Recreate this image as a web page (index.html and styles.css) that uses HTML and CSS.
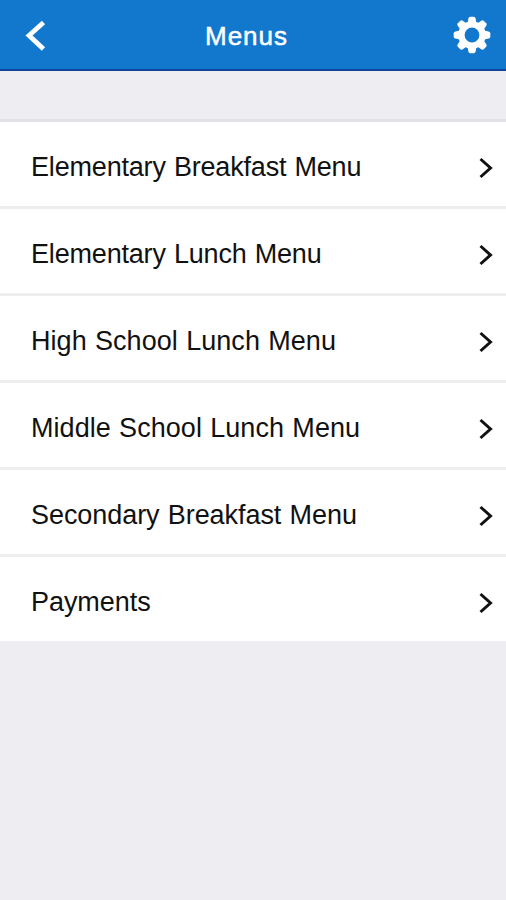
FILE: index.html
```html
<!DOCTYPE html>
<html lang="en">
<head>
<meta charset="utf-8">
<title>Menus</title>
<link rel="stylesheet" href="styles.css">
</head>
<body>
<header class="topbar">
  <a class="back" href="#" aria-label="Back">
    <svg width="24" height="34" viewBox="0 0 24 34"><path d="M19.5 4.5 L5 17.5 L19.5 31"/></svg>
  </a>
  <h1>Menus</h1>
  <a class="settings" href="#" aria-label="Settings">
    <svg width="38" height="38" viewBox="-19 -19 38 38">
      <circle r="10.6"/>
      <g id="teeth">
        <path id="tooth" d="M-4.4 -12 L-3.6 -16.6 Q-3.2 -18.3 -1.8 -18.3 H1.8 Q3.2 -18.3 3.6 -16.6 L4.4 -12 V-9.5 H-4.4 Z"/>
        <use href="#tooth" transform="rotate(45)"/>
        <use href="#tooth" transform="rotate(90)"/>
        <use href="#tooth" transform="rotate(135)"/>
        <use href="#tooth" transform="rotate(180)"/>
        <use href="#tooth" transform="rotate(225)"/>
        <use href="#tooth" transform="rotate(270)"/>
        <use href="#tooth" transform="rotate(315)"/>
      </g>
    </svg>
  </a>
</header>

<ul class="menu">
  <li class="tight"><a href="#"><span>Elementary Breakfast Menu</span><svg class="arrow" width="16" height="24" viewBox="0 0 16 24"><path d="M2.5 3 L12.5 12 L2.5 21"/></svg></a></li>
  <li class="tight"><a href="#"><span>Elementary Lunch Menu</span><svg class="arrow" width="16" height="24" viewBox="0 0 16 24"><path d="M2.5 3 L12.5 12 L2.5 21"/></svg></a></li>
  <li class="wide"><a href="#"><span>High School Lunch Menu</span><svg class="arrow" width="16" height="24" viewBox="0 0 16 24"><path d="M2.5 3 L12.5 12 L2.5 21"/></svg></a></li>
  <li class="wide"><a href="#"><span>Middle School Lunch Menu</span><svg class="arrow" width="16" height="24" viewBox="0 0 16 24"><path d="M2.5 3 L12.5 12 L2.5 21"/></svg></a></li>
  <li><a href="#"><span>Secondary Breakfast Menu</span><svg class="arrow" width="16" height="24" viewBox="0 0 16 24"><path d="M2.5 3 L12.5 12 L2.5 21"/></svg></a></li>
  <li><a href="#"><span>Payments</span><svg class="arrow" width="16" height="24" viewBox="0 0 16 24"><path d="M2.5 3 L12.5 12 L2.5 21"/></svg></a></li>
</ul>
</body>
</html>
```

FILE: styles.css
```css
* {
  box-sizing: border-box;
}

body {
  margin: 0;
  min-height: 100vh;
  font-family: "Liberation Sans", Helvetica, Arial, sans-serif;
  color: #111;
  background-color: #eeedf2;
}

a {
  color: inherit;
  text-decoration: none;
}

svg {
  display: block;
}

.topbar {
  display: grid;
  grid-template-columns: 60px 1fr 60px;
  align-items: center;
  height: 71px;
  padding: 0 15px 0 24px;
  color: #fff;
  background-color: #1278ce;
  border-bottom: 2px solid #0f459a;
}

.topbar h1 {
  margin: 2px 0 0;
  padding-right: 22px;
  font-size: 26px;
  font-weight: normal;
  letter-spacing: 1px;
  line-height: 30px;
  text-align: center;
  -webkit-text-stroke: 0.5px #fff;
}

.back path {
  fill: none;
  stroke: #fff;
  stroke-width: 4.8;
}

.settings {
  justify-self: end;
}

.settings svg {
  fill: #fff;
}

.settings circle {
  fill: none;
  stroke: #fff;
  stroke-width: 6.4;
}

.menu {
  margin: 48px 0 0;
  padding: 0;
  list-style: none;
  background-color: #fff;
  border-top: 3px solid #e2e1e6;
}

.menu a {
  display: flex;
  align-items: center;
  justify-content: space-between;
  height: 84px;
  padding: 6px 12px 0 31px;
  font-size: 27px;
  letter-spacing: -0.06px;
  line-height: 32px;
  word-spacing: 0.8px;
}

.menu .tight a {
  letter-spacing: -0.18px;
}

.menu .wide a {
  letter-spacing: 0.04px;
}

.menu li + li {
  border-top: 3px solid #f0edef;
}

.arrow {
  margin-top: 2px;
}

.arrow path {
  fill: none;
  stroke: #111;
  stroke-width: 3;
}
```
